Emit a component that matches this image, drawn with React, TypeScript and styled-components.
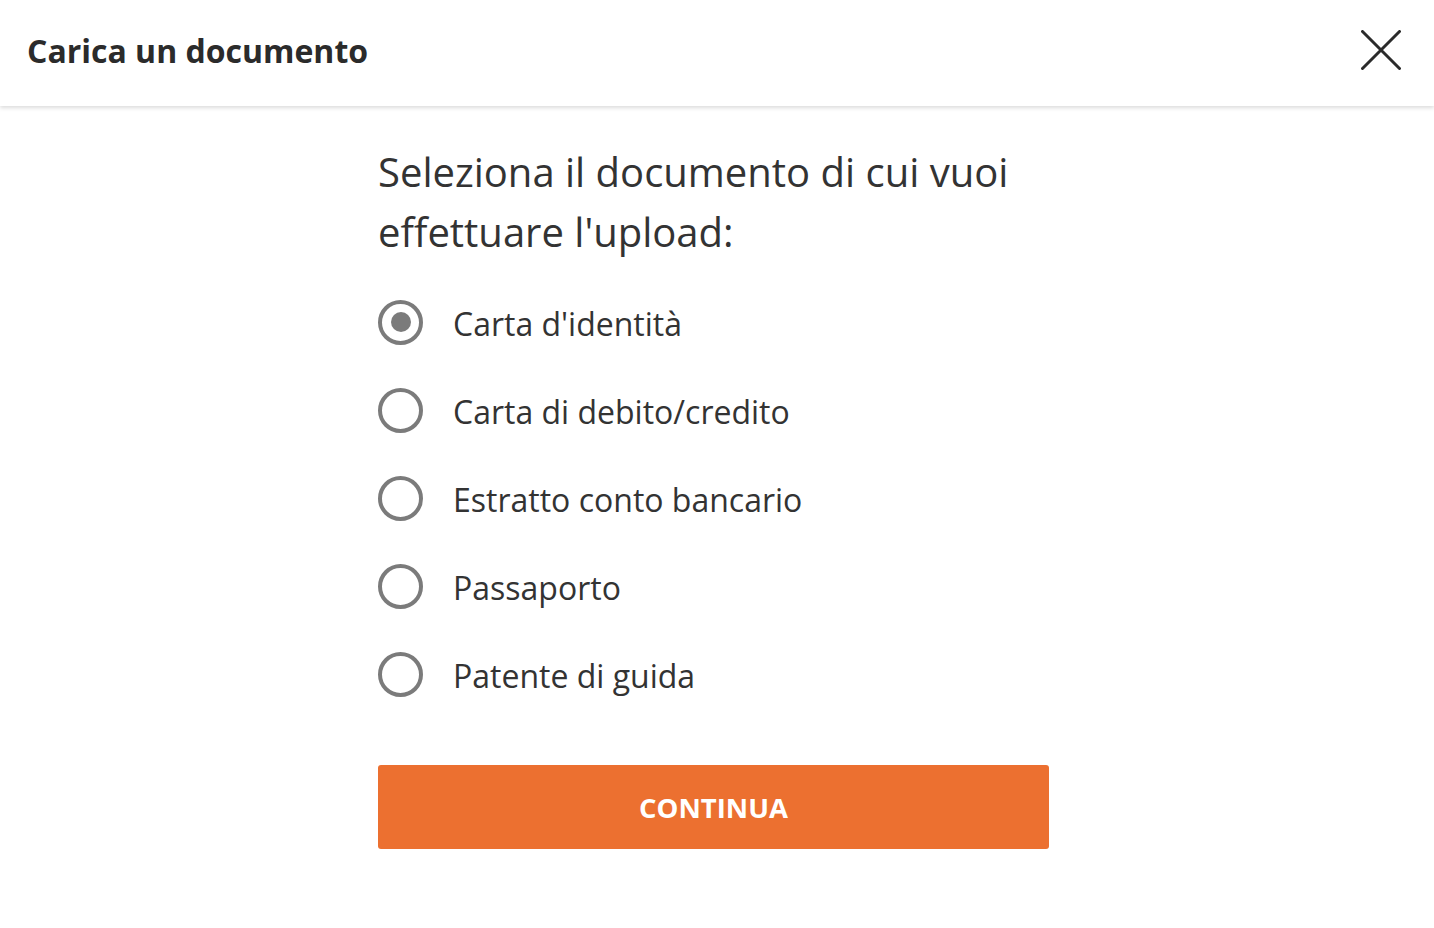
import React, { useState } from "react";
import styled, { createGlobalStyle } from "styled-components";

const Global = createGlobalStyle`
  html, body { margin: 0; padding: 0; background: #fff; }
  body { font-family: "Open Sans", "Liberation Sans", sans-serif; color: #333; }
  * { box-sizing: border-box; }
`;

const Page = styled.div`
  width: 1434px;
  min-height: 928px;
  background: #fff;
`;

const Header = styled.header`
  height: 106px;
  display: flex;
  align-items: center;
  justify-content: space-between;
  padding: 0 33px 6px 27px;
  background: #fff;
  box-shadow: 0 2px 4px rgba(0, 0, 0, 0.14);
  position: relative;
  z-index: 1;
`;

const Title = styled.h1`
  margin: 0;
  font-size: 32px;
  font-weight: 700;
  color: #2b2b2b;
  letter-spacing: 0;
`;

const CloseButton = styled.button`
  width: 40px;
  height: 40px;
  border: 0;
  background: transparent;
  padding: 0;
  display: flex;
  align-items: center;
  justify-content: center;
  cursor: pointer;
`;

const Main = styled.main`
  display: flex;
  justify-content: center;
  padding-top: 36px;
  padding-right: 7px;
`;

const Column = styled.div`
  width: 671px;
`;

const Heading = styled.h2`
  margin: 0;
  font-size: 40px;
  font-weight: 400;
  line-height: 60px;
  color: #333;
`;

const Options = styled.div`
  display: flex;
  flex-direction: column;
  margin-top: 16px;
`;

const OptionRow = styled.label`
  height: 88px;
  display: flex;
  align-items: center;
  gap: 30px;
  cursor: pointer;
`;

const Radio = styled.span<{ $checked: boolean }>`
  width: 45px;
  height: 45px;
  border-radius: 50%;
  border: 4px solid #7b7b7b;
  display: flex;
  align-items: center;
  justify-content: center;
  flex-shrink: 0;
  &::after {
    content: "";
    width: 20px;
    height: 20px;
    border-radius: 50%;
    background: #7b7b7b;
    display: ${(p) => (p.$checked ? "block" : "none")};
  }
`;

const OptionText = styled.span`
  font-size: 32px;
  color: #333;
  padding-top: 3px;
`;

const Continue = styled.button`
  margin-top: 47px;
  width: 671px;
  height: 84px;
  border: 0;
  border-radius: 3px;
  background: #ec7030;
  color: #fff;
  font-family: "Open Sans", "Liberation Sans", sans-serif;
  font-size: 27.5px;
  font-weight: 700;
  cursor: pointer;
`;

const options = [
  "Carta d'identità",
  "Carta di debito/credito",
  "Estratto conto bancario",
  "Passaporto",
  "Patente di guida",
];

export default function App() {
  const [selected, setSelected] = useState(0);
  return (
    <Page>
      <Global />
      <Header>
        <Title>Carica un documento</Title>
        <CloseButton aria-label="Chiudi">
          <svg width="40" height="40" viewBox="0 0 40 40">
            <path d="M1.5 1.5 L38.5 38.5 M38.5 1.5 L1.5 38.5" stroke="#2b2b2b" strokeWidth="3" strokeLinecap="round" />
          </svg>
        </CloseButton>
      </Header>
      <Main>
        <Column>
          <Heading>
            Seleziona il documento di cui vuoi
            <br />
            effettuare l'upload:
          </Heading>
          <Options>
            {options.map((o, i) => (
              <OptionRow key={o} onClick={() => setSelected(i)}>
                <Radio $checked={selected === i} />
                <OptionText>{o}</OptionText>
              </OptionRow>
            ))}
          </Options>
          <Continue>CONTINUA</Continue>
        </Column>
      </Main>
    </Page>
  );
}
